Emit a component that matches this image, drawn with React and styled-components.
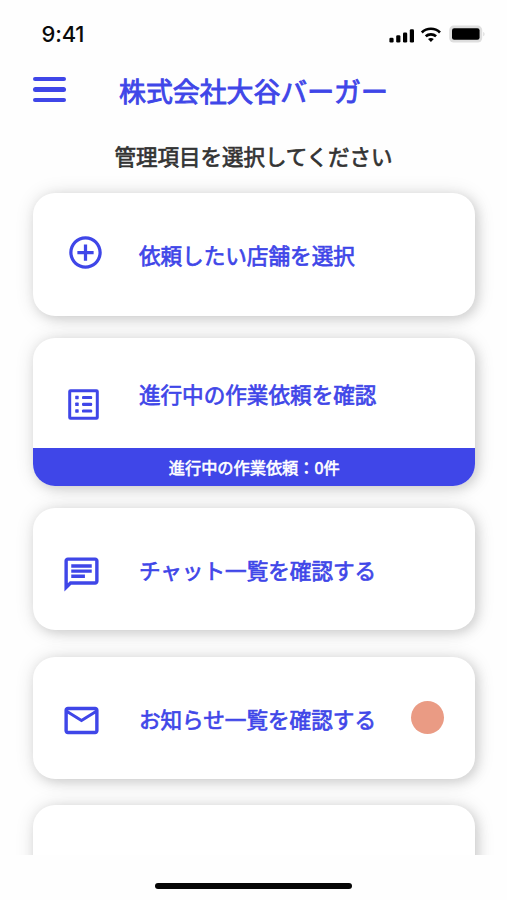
import React from 'react'
import styled, { createGlobalStyle } from 'styled-components'
import { MdAddCircleOutline, MdMailOutline, MdOutlineChat } from 'react-icons/md'

const blue = '#3f46e8'

const GlobalStyle = createGlobalStyle`
* {
  box-sizing: border-box;
}
body {
  margin: 0;
  background: #fefefe;
}
`
const Screen = styled.div`
width: 507px;
height: 900px;
display: flex;
flex-direction: column;
overflow: hidden;
background: #fefefe;
font-family: 'Noto Sans CJK JP', sans-serif;
font-weight: 400;
`
const StatusBar = styled.div`
height: 68px;
flex: none;
display: flex;
justify-content: space-between;
align-items: center;
padding: 0 22px 0 41.5px;
`
const Time = styled.span`
font-family: Inter, sans-serif;
font-size: 22px;
line-height: 26px;
font-weight: 500;
letter-spacing: -0.2px;
color: #0a0a0a;
`
const Header = styled.header`
height: 48px;
flex: none;
display: grid;
grid-template-columns: 33px 1fr;
column-gap: 53px;
align-items: center;
padding-left: 33px;
`
const MenuButton = styled.button`
display: flex;
flex-direction: column;
gap: 6.4px;
padding: 0;
margin-bottom: 5px;
border: 0;
background: none;

span {
  height: 4.4px;
  border-radius: 3px;
  background: ${blue};
}
`
const Title = styled.h1`
margin: 0 0 2px;
font-size: 26.9px;
line-height: 40px;
font-weight: 400;
-webkit-text-stroke: 0.9px ${blue};
color: ${blue};
`
const Lead = styled.p`
height: 32px;
flex: none;
margin: 24px 0 1px;
text-align: center;
font-size: 21.5px;
line-height: 32px;
font-weight: 400;
-webkit-text-stroke: 0.7px #333;
color: #333;
`
const List = styled.main`
height: 682px;
flex: none;
overflow: hidden;
padding: 20px 32px 0 33.4px;
`
const Card = styled.section`
height: ${props => props.$height}px;
margin-bottom: ${props => props.$gap}px;
display: flex;
flex-direction: column;
overflow: hidden;
border-radius: 22px;
background: #fff;
box-shadow: 3px 3px 12px rgba(0, 0, 0, 0.13), 1px 1px 20px rgba(0, 0, 0, 0.12);
`
const Row = styled.div`
flex: 1;
display: grid;
grid-template-columns: 41px 1fr 33px;
column-gap: 34px;
align-items: center;
padding: 0 31px 0 30.5px;
`
const IconBox = styled.div`
display: flex;
color: ${blue};
padding: ${props => props.$pad || '0'};
margin-left: ${props => props.$shift || 0}px;
`
const Label = styled.span`
font-size: 21.6px;
line-height: 32px;
font-weight: 400;
-webkit-text-stroke: 0.7px ${blue};
color: ${blue};
white-space: nowrap;
padding-top: 2px;
`
const Dot = styled.span`
width: 33px;
height: 33px;
border-radius: 50%;
background: #ea9b84;
`
const Progress = styled.div`
height: 38px;
display: flex;
align-items: center;
justify-content: center;
background: ${blue};
color: #fff;
font-size: 16.2px;
line-height: 24px;
-webkit-text-stroke: 0.6px #fff;
`
const HomeArea = styled.footer`
flex: 1;
display: flex;
justify-content: center;
align-items: flex-start;
padding-top: 28px;
`
const HomeBar = styled.div`
width: 197px;
height: 6.4px;
border-radius: 4px;
background: #060606;
`

const StatusIcons = () => (
  <svg width="100" height="24" viewBox="0 0 100 24">
    <rect x="4.4" y="15.7" width="4.2" height="4.8" rx="1.3" />
    <rect x="11.2" y="13.2" width="4.2" height="7.3" rx="1.3" />
    <rect x="18" y="10.4" width="4.2" height="10.1" rx="1.3" />
    <rect x="24.8" y="7.2" width="4.2" height="13.3" rx="1.3" />
    <g fill="none" stroke="#000" strokeWidth="2.7">
      <path d="M36.8 10.4a13.2 13.2 0 0 1 18.2 0" />
      <path d="M40.7 14.3a8 8 0 0 1 10.4 0" />
    </g>
    <path d="M45.9 19.9l-2.9-2.8a4.6 4.6 0 0 1 5.8 0z" />
    <rect x="64.2" y="3.6" width="33" height="17" rx="4.5" fill="#dedede" />
    <rect x="67" y="6.3" width="27.6" height="11.5" rx="2.2" />
    <path d="M98.2 10c1.8.5 1.8 3.7 0 4.2z" fill="#dedede" />
  </svg>
)

const ListIcon = () => (
  <svg width="31" height="31" viewBox="0 0 31 31" fill="currentColor">
    <rect x="1.7" y="1.7" width="27.6" height="27.6" rx="0.8" fill="none" stroke="currentColor" strokeWidth="3" />
    {[8.5, 15.3, 22].map(y => (
      <g key={y}>
        <rect x="7.2" y={y - 1.7} width="3.5" height="3.4" rx="0.6" />
        <rect x="14" y={y - 1.6} width="10.2" height="3.2" rx="1.2" />
      </g>
    ))}
  </svg>
)

const App = () => {
  return (
    <Screen>
      <GlobalStyle />
      <StatusBar>
        <Time>9:41</Time>
        <StatusIcons />
      </StatusBar>
      <Header>
        <MenuButton aria-label="メニュー">
          <span />
          <span />
          <span />
        </MenuButton>
        <Title>株式会社大谷バーガー</Title>
      </Header>
      <Lead>管理項目を選択してください</Lead>

      <List>
        <Card $height={122.7} $gap={22}>
          <Row>
            <IconBox $pad="0 0 4px 2px"><MdAddCircleOutline size={41} /></IconBox>
            <Label>依頼したい店舗を選択</Label>
          </Row>
        </Card>
        <Card $height={148.5} $gap={22}>
          <Row>
            <IconBox $pad="23px 0 0 4px"><ListIcon /></IconBox>
            <Label>進行中の作業依頼を確認</Label>
          </Row>
          <Progress>進行中の作業依頼：0件</Progress>
        </Card>
        <Card $height={122} $gap={26.5}>
          <Row>
            <IconBox $pad="10px 0 0 0" $shift={-3}><MdOutlineChat size={41} /></IconBox>
            <Label>チャット一覧を確認する</Label>
          </Row>
        </Card>
        <Card $height={122} $gap={26}>
          <Row>
            <IconBox $pad="6px 0 0 0" $shift={-3}><MdMailOutline size={41} /></IconBox>
            <Label>お知らせ一覧を確認する</Label>
            <Dot />
          </Row>
        </Card>
        <Card $height={122} $gap={0} />
      </List>

      <HomeArea>
        <HomeBar />
      </HomeArea>
    </Screen>
  )
}

export default App
